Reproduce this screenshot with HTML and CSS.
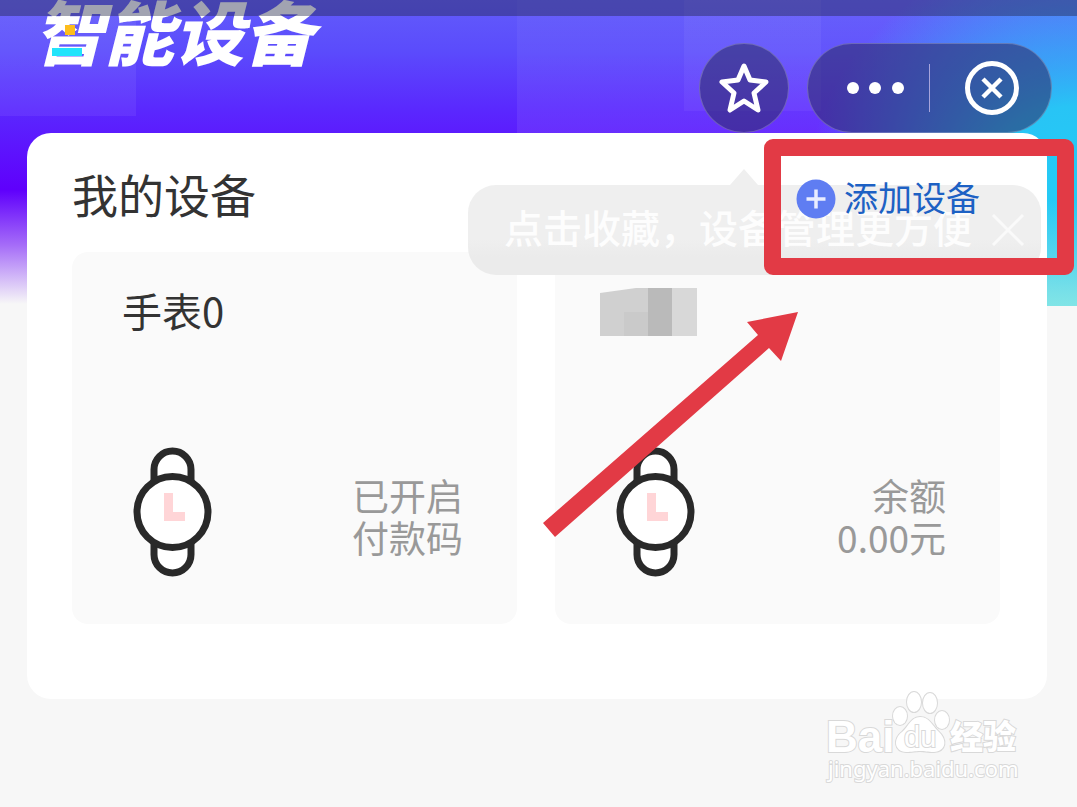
FILE: index.html
```
<!DOCTYPE html>
<html lang="zh-CN">
<head>
  <meta charset="utf-8">
  <title>智能设备</title>
  <link rel="stylesheet" href="styles.css">
</head>
<body>
<div class="page">
  <div class="statusbar"></div>
  <header class="top">
    <h1 class="brand">智能设备</h1>
    <i class="dot-yellow"></i>
    <i class="dot-cyan"></i>
    <div class="actions">
      <button class="star" aria-label="收藏">
        <svg width="52" height="54" viewBox="0 0 52 54"><path d="M26 5l6 14 16 2-12 11 4 17-14-9-14 9 4-17L4 21l16-2z" fill="none" stroke="#fff" stroke-width="5" stroke-linejoin="round"/></svg>
      </button>
      <div class="pill">
        <button class="more" aria-label="更多">
          <svg width="60" height="14" viewBox="0 0 60 14" fill="#fff"><circle cx="8" cy="7" r="6"/><circle cx="30" cy="7" r="6"/><circle cx="53" cy="7" r="6"/></svg>
        </button>
        <button class="close" aria-label="关闭">
          <svg width="56" height="56" viewBox="0 0 56 56" fill="none" stroke="#fff"><circle cx="28" cy="28" r="24.500" stroke-width="5"/><path d="M19 19l18 18M37 19L19 37" stroke-width="4.500"/></svg>
        </button>
      </div>
    </div>
  </header>

  <main class="panel">
    <div class="panel-head">
      <h2>我的设备</h2>
      <a class="add" href="#">
        <svg width="40" height="40" viewBox="0 0 40 40"><circle cx="20" cy="20" r="19.500" fill="#5f7df2"/><path d="M20 10.500v19M10.500 20h19" stroke="#e9edff" stroke-width="3.500"/></svg>
        <span>添加设备</span>
      </a>
    </div>
    <div class="tip">
      <span>点击收藏，设备管理更方便</span>
      <svg width="34" height="34" viewBox="0 0 34 34"><path d="M2 2l30 30M32 2L2 32" stroke="#fafafa" stroke-width="3"/></svg>
    </div>

    <div class="devices">
      <section class="device">
        <h3>手表0</h3>
        <div class="info">
          <svg class="watch" width="80" height="132" viewBox="0 0 80 132"><g fill="#fff" stroke="#292929" stroke-width="7"><rect x="21" y="5" width="37" height="122" rx="18.500"/><circle cx="39.500" cy="66" r="35.500"/></g><path d="M31 47h9v19h12v9H31z" fill="#ffd5d7"/></svg>
          <p>已开启<br>付款码</p>
        </div>
      </section>
      <section class="device">
        <h3><svg class="mosaic" width="97" height="50" viewBox="0 0 97 50"><path d="M0 5L36 0h12v48H0z" fill="#d0d0d0"/><path d="M24 24h24v24H24z" fill="#cacaca"/><path d="M48 0h24v48H48z" fill="#bababa"/><path d="M72 0h25v48H72z" fill="#d8d8d8"/></svg></h3>
        <div class="info">
          <svg class="watch" width="80" height="132" viewBox="0 0 80 132"><g fill="#fff" stroke="#292929" stroke-width="7"><rect x="21" y="5" width="37" height="122" rx="18.500"/><circle cx="39.500" cy="66" r="35.500"/></g><path d="M31 47h9v19h12v9H31z" fill="#ffd5d7"/></svg>
          <p>余额<br>0.00元</p>
        </div>
      </section>
    </div>
  </main>

  <!-- red marks over the page -->
  <div class="mark-box"></div>
  <svg class="mark-arrow" width="256" height="228" viewBox="0 0 256 228"><path d="M255 2L204 12l11 13L0 213l12 14L226 38l12 13z" fill="#e23a45"/></svg>

  <svg class="watermark" width="200" height="104" viewBox="0 0 200 104">
    <g fill="#fff" stroke="#d9d9d9" stroke-width="2" paint-order="stroke">
      <text class="wm-latin" x="1" y="63">Bai</text>
      <ellipse cx="75" cy="27" rx="7" ry="9"/>
      <ellipse cx="89" cy="13" rx="7" ry="10"/>
      <ellipse cx="105" cy="14" rx="7" ry="10"/>
      <ellipse cx="117" cy="31" rx="7" ry="9"/>
      <path d="M95 28c9 0 12 8 18 14 10 9 8 20-4 21-7 0-9-1-14-1s-8 1-14 1c-12-1-13-13-4-20 7-6 9-15 18-15z"/>
      <text class="wm-du" x="79" y="58">du</text>
      <text class="wm-cjk" x="125" y="60">经验</text>
      <text class="wm-url" x="3" y="88">jingyan.baidu.com</text>
    </g>
  </svg>
</div>
</body>
</html>
```
FILE: styles.css
```
* { box-sizing: border-box; }
body {
  margin: 0;
  background: #f7f7f7;
  font-family: "Noto Sans CJK SC", "Noto Sans", sans-serif;
  color: #333;
}
h1, h2, h3, p { margin: 0; font-weight: 400; }
button { border: 0; padding: 0; background: none; display: flex; align-items: center; justify-content: center; }
svg { display: block; flex: none; }

.page {
  position: relative;
  min-height: 100vh;
  overflow: hidden;
  background:
    linear-gradient(#ffffff10, #ffffff10) 0 0 / 136px 116px no-repeat,
    linear-gradient(#ffffff0c, #ffffff0c) 684px 0 / 137px 111px no-repeat,
    linear-gradient(#80e4e600 200px, #80e4e6 306px) 100% 0 / 30px 306px no-repeat,
    radial-gradient(ellipse 270px 240px at 100% 190px, #24ccf5 0%, #28c4f5 35%, #28c4f500 100%) 0 0 / 100% 306px no-repeat,
    linear-gradient(#ffffff08, #ffffff14) 100% 0 / 52% 133px no-repeat,
    linear-gradient(#625cfb 0, #5b4cfc 50px, #5a28fe 110px, #5f00fc 190px, #a56cf8 245px, #f7f7f7 304px) 0 0 / 100% 306px no-repeat,
    #f7f7f7;
}
.statusbar {
  position: absolute;
  top: 0;
  left: 0;
  right: 0;
  height: 16px;
  background: rgba(30, 35, 70, .42);
  z-index: 2;
}

.top {
  position: relative;
  display: flex;
  justify-content: space-between;
  height: 133px;
  padding: 0 25px 0 34px;
}
.brand {
  font-size: 70px;
  line-height: 60px;
  font-weight: 900;
  font-style: italic;
  color: #fff;
}
.dot-yellow, .dot-cyan { position: absolute; }
.dot-yellow { left: 65px; top: 25px; width: 10px; height: 10px; background: #fdbd1c; }
.dot-cyan { left: 52px; top: 48px; width: 30px; height: 8px; background: #22e4fb; }
.actions { display: flex; gap: 18px; padding-top: 43px; }
.star, .pill {
  height: 90px;
  border: 1px solid rgba(255, 255, 255, .22);
  border-radius: 45px;
  background: rgba(45, 45, 105, .58);
}
.star { width: 90px; }
.pill { width: 245px; display: flex; align-items: center; }
.more { width: 122px; height: 48px; padding-left: 12px; border-right: 1px solid #a7a4dc; }
.close { flex: 1; padding-left: 2px; }

.panel {
  position: relative;
  margin: 0 30px 0 27px;
  padding: 0 47px 75px 45px;
  border-radius: 24px;
  background: #fff;
}
.panel-head {
  display: flex;
  align-items: flex-start;
  justify-content: space-between;
  height: 119px;
  padding: 34px 20px 0 0;
}
.panel-head h2 { font-size: 46px; line-height: 52px; }
.add {
  position: relative;
  z-index: 2;
  display: flex;
  align-items: center;
  gap: 8px;
  padding-top: 10px;
  font-size: 34px;
  line-height: 40px;
  color: #1d61c4;
  text-decoration: none;
}
.add span { padding-bottom: 4px; }

.tip {
  position: absolute;
  z-index: 1;
  top: 52px;
  right: 6px;
  width: 573px;
  height: 90px;
  display: flex;
  align-items: center;
  justify-content: space-between;
  padding: 0 16px 0 36px;
  border-radius: 28px;
  background: linear-gradient(#efefef 60%, #ebebeb 80%);
  color: #fdfdfd;
  font-size: 39px;
  font-weight: 500;
  white-space: nowrap;
}
.tip span { padding-bottom: 8px; }
.tip::before {
  content: "";
  position: absolute;
  left: 262px;
  top: -16px;
  border: 14px solid transparent;
  border-top: 0;
  border-bottom: 16px solid #efefef;
}

.devices { display: grid; grid-template-columns: 1fr 1fr; gap: 38px; }
.device {
  min-height: 372px;
  padding: 36px 54px 46px 50px;
  border-radius: 16px;
  background: #fafafa;
  display: flex;
  flex-direction: column;
  justify-content: space-between;
}
.device h3 { font-size: 40px; line-height: 44px; }
.mosaic { margin-left: -5px; }
.info { display: flex; align-items: center; justify-content: space-between; padding-left: 11px; }
.info p { font-size: 37px; line-height: 42px; color: #999; text-align: right; padding-top: 8px; }

.mark-box {
  position: absolute;
  z-index: 3;
  top: 139px;
  right: 3px;
  width: 310px;
  height: 136px;
  border: 17px solid #e23a45;
  border-radius: 9px;
}
.mark-arrow { position: absolute; z-index: 3; top: 310px; right: 278px; }

.watermark { position: absolute; right: 52px; bottom: 14px; }
.wm-latin { font: 700 44px "Liberation Sans", sans-serif; }
.wm-du { font: 400 29px "Liberation Sans", sans-serif; }
.wm-cjk { font: 900 33px "Noto Sans CJK SC", sans-serif; }
.wm-url { font: 400 22px "Noto Sans", sans-serif; }
```
